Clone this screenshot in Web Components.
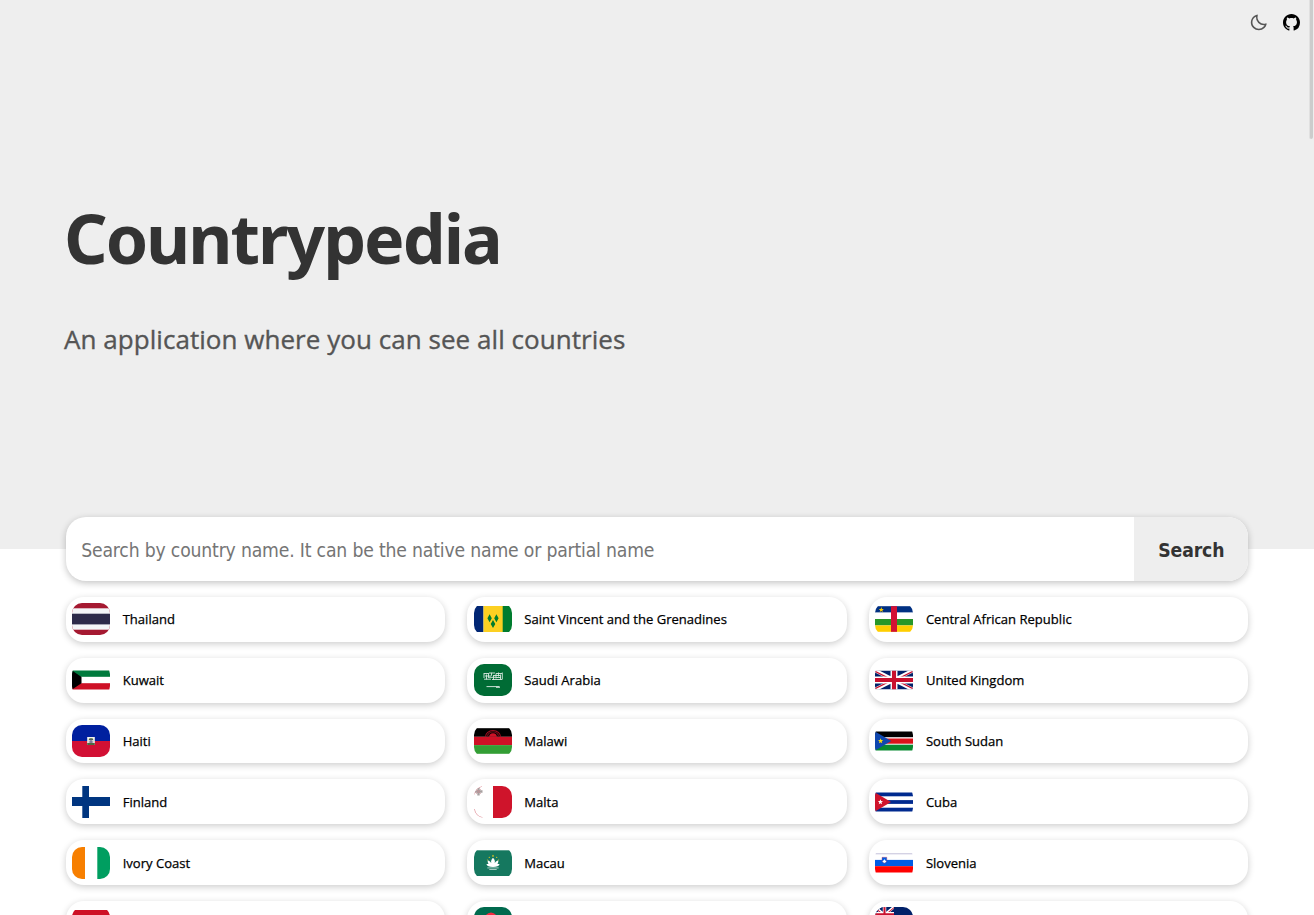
<!DOCTYPE html>
<html lang="en">
<head>
<meta charset="utf-8">
<title>Countrypedia</title>
<style>
html,body{margin:0;height:100%;overflow:hidden;background:#fff}
body{font-family:"Noto Sans",sans-serif}
</style>
</head>
<body>
<country-app></country-app>
<script>
const define = (name, html, setup) => {
  const t = document.createElement('template');
  t.innerHTML = html;
  customElements.define(name, class extends HTMLElement {
    constructor() {
      super();
      this.attachShadow({mode: 'open'}).append(t.content.cloneNode(true));
    }
    connectedCallback() { if (setup) setup(this, this.shadowRoot); }
  });
};

const r = (x, y, w, h, c) => `<rect x="${x}" y="${y}" width="${w}" height="${h}" fill="${c}"/>`;
const star = (cx, cy, s, c) => {
  let p = '';
  for (let i = 0; i < 10; i++) {
    const a = -Math.PI / 2 + i * Math.PI / 5, q = i % 2 ? s * .42 : s;
    p += `${(cx + q * Math.cos(a)).toFixed(2)},${(cy + q * Math.sin(a)).toFixed(2)} `;
  }
  return `<polygon points="${p}" fill="${c}"/>`;
};
const union = (x, y, w, h) => `<svg x="${x}" y="${y}" width="${w}" height="${h}" viewBox="0 0 60 30" preserveAspectRatio="none"><path fill="#012169" d="M0 0h60v30H0z"/><path d="M0 0l60 30M60 0L0 30" stroke="#fff" stroke-width="6"/><path d="M0 1.3l30 15M30 13.700l30 15M60 1.300L30 16.300M30 13.700L0 28.700" stroke="#c8102e" stroke-width="2"/><path d="M30 0v30M0 15h60" stroke="#fff" stroke-width="11"/><path d="M30 0v30M0 15h60" stroke="#c8102e" stroke-width="6.500"/></svg>`;

const flags = {
  thailand: r(0,0,38,32,'#a51931')+r(0,5.3,38,21.4,'#f4f5f8')+r(0,10.7,38,10.7,'#2d2a4a'),
  vincent: r(0,3,9.5,26,'#012674')+r(9.5,3,19.5,26,'#fcd022')+r(28.7,3,9.3,26,'#007c2e')+'<path fill="#007c2e" d="M15.600 11.200l2.200 4-2.200 4-2.200-4zM22.400 11.200l2.200 4-2.200 4-2.200-4zM19 17l2.300 4-2.300 4-2.300-4z"/>',
  car: r(0,3.2,38,6.4,'#003082')+r(0,9.6,38,6.4,'#fff')+r(0,16,38,6.400,'#289728')+r(0,22.4,38,6.4,'#ffce00')+r(16,3.2,6,25.6,'#d21034')+star(6.3,6.800,2.700,'#ffce00'),
  kuwait: r(0,6.500,38,6.400,'#007a3d')+r(0,12.900,38,6.300,'#fff')+r(0,19.200,38,6.300,'#ce1126')+'<path d="M0 6.500l9.500 6.400v6.300L0 25.500z"/>',
  saudi: r(0,0,38,32,'#006c35')+'<path d="M10 9.500h4M15 9h6M22 9.500h6M10 9v5M12.500 10.500v5M14.500 9v4.500M17.500 8.800v3M19.500 11v5M22 9.500v5M24.500 8.500v4M26.500 10.500v5M28.300 8.500v7M10 15.200h7M18 15.500h10M11 12h6M14 13.300h8M22 13.500h5M20 11.500h6" stroke="#fff" stroke-width=".9" opacity=".85"/><path d="M12.500 22.600h13M22 23.300h4" stroke="#fff" stroke-width=".8"/>',
  uk: union(0,6.5,38,19),
  haiti: r(0,0,38,16,'#00209f')+r(0,16,38,16,'#d21034')+r(15.200,12,7.600,8,'#f4f4ee')+'<path fill="#4c6b42" d="M15.200 20v-2h7.600v2zM17.500 13.200h3l1 2h-5z"/><path stroke="#5b5280" d="M16.700 17h4.600M19 14v4"/>',
  malawi: r(0,3.200,38,8.600,'#000')+r(0,11.800,38,8.300,'#ce1126')+r(0,20.100,38,8.700,'#339e35')+'<path fill="#ce1126" d="M15.200 11.800a3.800 3.600 0 0 1 7.600 0z"/><path fill="none" stroke="#a30e20" stroke-width="1.100" d="M11.500 11.800a7.500 6.300 0 0 1 15 0"/><path fill="none" stroke="#640c16" stroke-width="1.200" d="M13.400 11.800a5.600 5 0 0 1 11.200 0"/>',
  sudan: r(0,6.500,38,6,'#000')+r(0,12.400,38,7.300,'#fff')+r(0,13.500,38,5.200,'#da121a')+r(0,19.700,38,5.800,'#078930')+'<path fill="#0f47af" d="M0 6.500L16.300 16 0 25.500z"/>'+star(5.600,16,2.800,'#fcdd09'),
  finland: r(0,0,38,32,'#fff')+r(0,11,38,9,'#003580')+r(10.300,0,6.700,32,'#003580'),
  malta: r(0,0,38,32,'#fff')+r(19,0,19,32,'#cf142b')+'<path fill="#a8a0a0" d="M3.300 1.500h2.400v2.800h2.800v2.400H5.700v2.800H3.300V6.700H.5V4.300h2.800z"/><path stroke="#c98a90" stroke-width=".8" fill="none" d="M2.300 3.300l4.400 4.400M6.700 3.300L2.300 7.700"/><path stroke="#d7737f" stroke-width=".8" fill="none" d="M.3 23Q1.500 30.300 8.500 31.700M.3 8.500Q1 2 8 .3"/>',
  cuba: r(0,6.500,38,19,'#002a8f')+r(0,10.300,38,3.800,'#fff')+r(0,17.900,38,3.800,'#fff')+'<path fill="#cf142b" d="M0 6.500L16 16 0 25.500z"/>'+star(5.400,16,2.800,'#fff'),
  ivory: r(0,0,13,32,'#f77f00')+r(13,0,12.500,32,'#fff')+r(25.300,0,12.700,32,'#009e60'),
  macau: r(0,3.300,38,25.700,'#15785f')+'<path fill="#fff" d="M19 10.800c2 2 2.300 4 1.600 5.500 1.600-2.300 3-2.700 3.700-2.700.2 1.600-.3 2.800-1 3.500h2.300c-.7 2.300-2.800 3-6.600 3s-5.900-.7-6.600-3h2.300c-.7-.7-1.200-1.900-1-3.500.7 0 2.100.4 3.700 2.700-.7-1.500-.4-3.500 1.600-5.500z"/><path d="M13.300 20.900h11.400M15.300 22.500h7.400" stroke="#c9e0da" stroke-width=".8"/>'+star(19,8.900,1.300,'#fbd116')+star(15.300,10.300,.9,'#fbd116')+star(22.700,10.300,.9,'#fbd116')+star(13.400,13,.8,'#fbd116')+star(24.600,13,.8,'#fbd116'),
  slovenia: r(0,6.500,38,19,'#fff')+r(0,6.500,38,.7,'#a9a5ca')+r(0,12.900,38,6.300,'#005ce5')+r(0,19.200,38,6.300,'#f00')+'<path fill="#005ce5" stroke="#d5435e" stroke-width=".4" d="M7 10.300h4.800v3.200q0 2-2.400 3-2.400-1-2.400-3z"/><path fill="#fff" d="M9.400 12.300l2 2.400-2 1.300-2-1.300z"/>',
  red: r(0,3,38,26,'#ce1126'),
  green: r(0,0,38,32,'#006a4e')+'<ellipse cx="17" cy="15" rx="7.500" ry="9.500" fill="#f42a41"/>',
  ensign: r(0,0,38,32,'#012169')+union(0,0,19,16)
};

define('country-flag', `<style>
:host{display:block;width:38px;height:32px;border-radius:10px;overflow:hidden;flex:none}
:host>svg{display:block}</style><svg class="flag" width="38" height="32" viewBox="0 0 38 32"></svg>`,
  (el, root) => root.querySelector('.flag').innerHTML = flags[el.getAttribute('code')] || '');

define('country-card', `<style>
:host{display:flex;align-items:center;box-sizing:border-box;height:44.820px;padding:0 6.300px;gap:12.700px;background:#fff;border-radius:18px;box-shadow:0 2px 7px rgba(0,0,0,.2);font:13.060px/20px "Open Sans",sans-serif;color:#000;-webkit-text-stroke:.25px #000}
</style><slot name="flag"></slot><slot></slot>`);

define('country-grid', `<style>
:host{display:grid;grid-template-columns:repeat(3,1fr);gap:16px 22.200px;margin:16px 5% 0}
</style><slot></slot>`);

define('search-bar', `<style>
:host{display:flex;height:64px;margin:-32px 5% 0;border-radius:20px;overflow:hidden;background:#fff;box-shadow:0 2px 7px rgba(0,0,0,.24);position:relative;font:19.2px/67px "DejaVu Sans Condensed","DejaVu Sans",sans-serif}
.field{flex:1;padding-left:15.500px;color:#757575;white-space:nowrap;letter-spacing:-.175px}
.button{width:114px;text-align:center;background:#eee;color:#333;font-weight:700;letter-spacing:-.1px}
</style><div class="field"><span><slot></slot></span></div><div class="button"><span>Search</span></div>`);

define('top-actions', `<style>
:host{display:flex;justify-content:flex-end;align-items:center;gap:14.400px;height:45px;padding-right:14px}
svg{display:block}</style>
<svg width="19.200" height="19.200" viewBox="0 0 24 24" fill="#555"><path d="M20.742 13.045a8.088 8.088 0 0 1-2.077.271c-2.135 0-4.14-.83-5.646-2.336a8.025 8.025 0 0 1-2.064-7.723A1 1 0 0 0 9.73 2.034a10.014 10.014 0 0 0-4.489 2.582c-3.898 3.898-3.898 10.243 0 14.143a9.937 9.937 0 0 0 7.072 2.93 9.93 9.93 0 0 0 7.07-2.929 10.007 10.007 0 0 0 2.583-4.491 1.001 1.001 0 0 0-1.224-1.224zm-2.772 4.301a7.947 7.947 0 0 1-5.656 2.343 7.953 7.953 0 0 1-5.658-2.344c-3.118-3.119-3.118-8.195 0-11.314a7.923 7.923 0 0 1 2.060-1.483 10.027 10.027 0 0 0 2.890 7.848 9.972 9.972 0 0 0 7.848 2.891 8.036 8.036 0 0 1-1.484 2.059z"/></svg>
<svg width="17" height="17" viewBox="0 0 16 16"><path d="M8 0C3.580 0 0 3.580 0 8c0 3.540 2.290 6.530 5.470 7.590.4.070.550-.170.550-.380 0-.190-.010-.820-.010-1.490-2.010.370-2.530-.490-2.690-.940-.090-.230-.480-.940-.820-1.130-.280-.150-.680-.520-.010-.530.630-.010 1.080.580 1.230.820.720 1.210 1.870.870 2.330.660.070-.520.280-.870.510-1.070-1.780-.2-3.640-.890-3.640-3.950 0-.870.310-1.590.820-2.150-.080-.2-.360-1.020.080-2.120 0 0 .670-.210 2.200.820.640-.180 1.320-.270 2-.270s1.360.090 2 .270c1.530-1.040 2.200-.820 2.200-.820.440 1.100.160 1.920.080 2.120.510.560.820 1.270.820 2.150 0 3.070-1.870 3.750-3.650 3.950.290.250.540.730.540 1.480 0 1.070-.010 1.930-.010 2.200 0 .210.150.460.550.380A8.010 8.010 0 0 0 16 8c0-4.420-3.580-8-8-8z"/></svg>`);

define('hero-banner', `<style>
:host{display:flow-root;height:549px;background:#eee}
h1{margin:147px 0 0 64px;font:700 68px/92px "Noto Sans",sans-serif;letter-spacing:-2.020px;color:#333;width:max-content}
p{margin:37px 0 0 64px;font:400 26px/36px "Open Sans",sans-serif;letter-spacing:.045px;color:#555;-webkit-text-stroke:.35px #555;width:max-content}
</style><top-actions></top-actions><h1><slot name="title"></slot></h1><p><slot name="tagline"></slot></p>`);

define('scroll-thumb', `<style>
:host{display:block;box-sizing:border-box;position:absolute;top:0;right:1px;width:4px;height:139px;background:#ccc;border-left:1px solid #e0e0e0;border-radius:0 0 2px 2px}
</style>`);

const rows = [['thailand','Thailand'],['vincent','Saint Vincent and the Grenadines'],['car','Central African Republic'],['kuwait','Kuwait'],['saudi','Saudi Arabia'],['uk','United Kingdom'],['haiti','Haiti'],['malawi','Malawi'],['sudan','South Sudan'],['finland','Finland'],['malta','Malta'],['cuba','Cuba'],['ivory','Ivory Coast'],['macau','Macau'],['slovenia','Slovenia'],['red',''],['green',''],['ensign','']];
define('country-app', `<style>
:host{display:block;position:relative;height:100vh;overflow:hidden}
</style>
<hero-banner><span slot="title">Countrypedia</span><span slot="tagline">An application where you can see all countries</span></hero-banner>
<search-bar>Search by country name. It can be the native name or partial name</search-bar>
<country-grid>${rows.map(([c, n]) => `<country-card><country-flag slot="flag" code="${c}"></country-flag><span>${n}</span></country-card>`).join('')}</country-grid>
<scroll-thumb></scroll-thumb>`);
</script>
</body>
</html>
